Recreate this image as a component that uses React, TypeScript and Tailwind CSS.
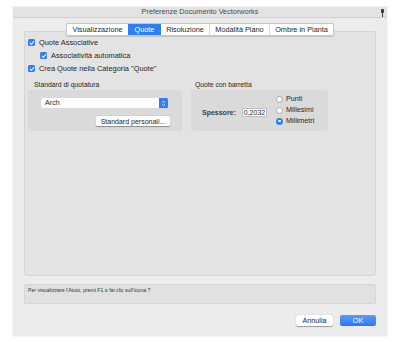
import React from "react";

const font = { fontFamily: '"Liberation Sans", Arial, sans-serif' };

function Check({ label, indent = false }: { label: string; indent?: boolean }) {
  return (
    <div className={`flex h-[13px] items-center ${indent ? "pl-[15px]" : "pl-[3px]"}`}>
      <div className="flex h-[7px] w-[7px] items-center justify-center rounded-[1.5px] bg-[#2f7ef5]">
        <svg width="6" height="6" viewBox="0 0 10 10">
          <path d="M2 5.2 L4.2 7.5 L8 2.5" fill="none" stroke="white" strokeWidth="1.8" strokeLinecap="round" strokeLinejoin="round" />
        </svg>
      </div>
      <span className="ml-[4px] text-[7.4px] leading-none text-[#262626]">{label}</span>
    </div>
  );
}

function Radio({ label, on = false }: { label: string; on?: boolean }) {
  return (
    <div className="flex h-[11px] items-center">
      {on ? (
        <div className="flex h-[7px] w-[7px] items-center justify-center rounded-full bg-[#2f7ef5]">
          <div className="h-[2.5px] w-[2.5px] rounded-full bg-white" />
        </div>
      ) : (
        <div className="h-[7px] w-[7px] rounded-full border-[0.5px] border-[#a9a9a9] bg-white" />
      )}
      <span className="ml-[3px] text-[7.2px] leading-none text-[#262626]">{label}</span>
    </div>
  );
}

const tabs = ["Visualizzazione", "Quote", "Risoluzione", "Modalità Piano", "Ombre in Pianta"];
const tabW = [61, 33, 48, 60, 64];

export default function App() {
  return (
    <div className="h-[342px] w-[399px] bg-white pl-[13px] pt-[7px]" style={font}>
      <div className="flex h-[329px] w-[374px] flex-col bg-[#ececec] shadow-[0_0_1px_rgba(0,0,0,0.25)]">
        {/* title bar */}
        <div className="relative flex h-[11px] items-center justify-center border-b border-[#d2d2d2] bg-[#e3e3e3]">
          <span className="text-[7.3px] leading-none text-[#4a4a4a]">Preferenze Documento Vectorworks</span>
          <svg className="absolute right-[2px] top-[2px]" width="5" height="8" viewBox="0 0 5 8">
            <rect x="1" y="0" width="3" height="4" rx="1" fill="#3a3a3a" />
            <rect x="2" y="4" width="1" height="4" fill="#3a3a3a" />
          </svg>
        </div>

        <div className="mx-[11px] mt-[5px] flex flex-col">
          {/* tabs */}
          <div className="relative z-10 flex h-[13px] justify-center">
            <div className="flex h-[13px] overflow-hidden rounded-[2px] border-[0.5px] border-[#c8c8c8] bg-white shadow-[0_0.5px_1px_rgba(0,0,0,0.15)]">
              {tabs.map((t, i) => (
                <div
                  key={t}
                  style={{ width: tabW[i] }}
                  className={`flex items-center justify-center text-[7.3px] leading-none ${
                    t === "Quote" ? "bg-[#2f7ef5] text-white" : "text-[#262626]"
                  } ${i > 0 && t !== "Quote" && tabs[i - 1] !== "Quote" ? "border-l border-[#dcdcdc]" : ""}`}
                >
                  {t}
                </div>
              ))}
            </div>
          </div>

          {/* panel */}
          <div className="-mt-[5px] flex h-[245px] flex-col rounded-[2px] border-[0.5px] border-[#d6d6d6] bg-[#e3e3e3] pt-[4px]">
            <Check label="Quote Associative" />
            <Check label="Associatività automatica" indent />
            <Check label={'Crea Quote nella Categoria "Quote"'} />

            <div className="mt-[6px] flex gap-[9px] pl-[3px]">
              {/* left group */}
              <div className="flex w-[154px] flex-col">
                <div className="h-[9px] pl-[6px] text-[6.8px] leading-[7px] text-[#262626]">Standard di quotatura</div>
                <div className="flex h-[41px] flex-col rounded-[2px] bg-[#dadada] pl-[13px] pt-[8px]">
                  <div className="flex h-[10px] w-[127px] items-center rounded-[1.5px] bg-white shadow-[0_0_0.5px_rgba(0,0,0,0.4)]">
                    <span className="flex-1 pl-[4px] text-[7.2px] leading-none text-[#262626]">Arch</span>
                    <div className="flex h-[10px] w-[9px] items-center justify-center rounded-r-[1.5px] bg-[#2f7ef5]">
                      <svg width="5" height="7" viewBox="0 0 5 7">
                        <path d="M1 2.6 L2.5 1.2 L4 2.6 M1 4.4 L2.5 5.8 L4 4.4" fill="none" stroke="white" strokeWidth="0.8" />
                      </svg>
                    </div>
                  </div>
                  <div className="mt-[8px] flex w-[129px] justify-end">
                    <div className="flex h-[10px] w-[74px] items-center justify-center rounded-[1.5px] bg-white text-[7px] leading-none text-[#262626] shadow-[0_0.5px_1px_rgba(0,0,0,0.35)]">
                      Standard personali...
                    </div>
                  </div>
                </div>
              </div>

              {/* right group */}
              <div className="flex w-[137px] flex-col">
                <div className="h-[9px] pl-[4px] text-[6.8px] leading-[7px] text-[#262626]">Quote con barretta</div>
                <div className="flex h-[41px] rounded-[2px] bg-[#dadada] pl-[11px]">
                  <div className="flex items-center pt-[3px]">
                    <span className="w-[29px] text-[7px] font-bold leading-none text-[#3a3a3a]">Spessore:</span>
                    <div className="ml-[11px] flex h-[9px] w-[25px] items-center justify-center border-[0.5px] border-[#bdbdbd] bg-white text-[7px] leading-none text-[#262626]">
                      0,2032
                    </div>
                  </div>
                  <div className="ml-[9px] flex flex-col pt-[3.5px]">
                    <Radio label="Punti" />
                    <Radio label="Millesimi" />
                    <Radio label="Millimetri" on />
                  </div>
                </div>
              </div>
            </div>
          </div>

          {/* help box */}
          <div className="mt-[8px] h-[20px] rounded-[2px] border-[0.5px] border-[#d6d6d6] bg-[#e1e1e1] pl-[3px] pt-[3px]">
            <span className="block text-[5.2px] leading-[5px] text-[#333]">
              Per visualizzare l'Aiuto, premi F1 o fai clic sull'icona ?
            </span>
          </div>

          {/* buttons */}
          <div className="mt-[11px] flex justify-end gap-[7px]">
            <div className="flex h-[11px] w-[37px] items-center justify-center rounded-[2px] bg-white text-[7.2px] leading-none text-[#262626] shadow-[0_0.5px_1px_rgba(0,0,0,0.35)]">
              Annulla
            </div>
            <div className="flex h-[11px] w-[36px] items-center justify-center rounded-[2px] bg-gradient-to-b from-[#5a9bf9] to-[#2a78f5] text-[7.2px] leading-none text-white">
              OK
            </div>
          </div>
        </div>
      </div>
    </div>
  );
}
